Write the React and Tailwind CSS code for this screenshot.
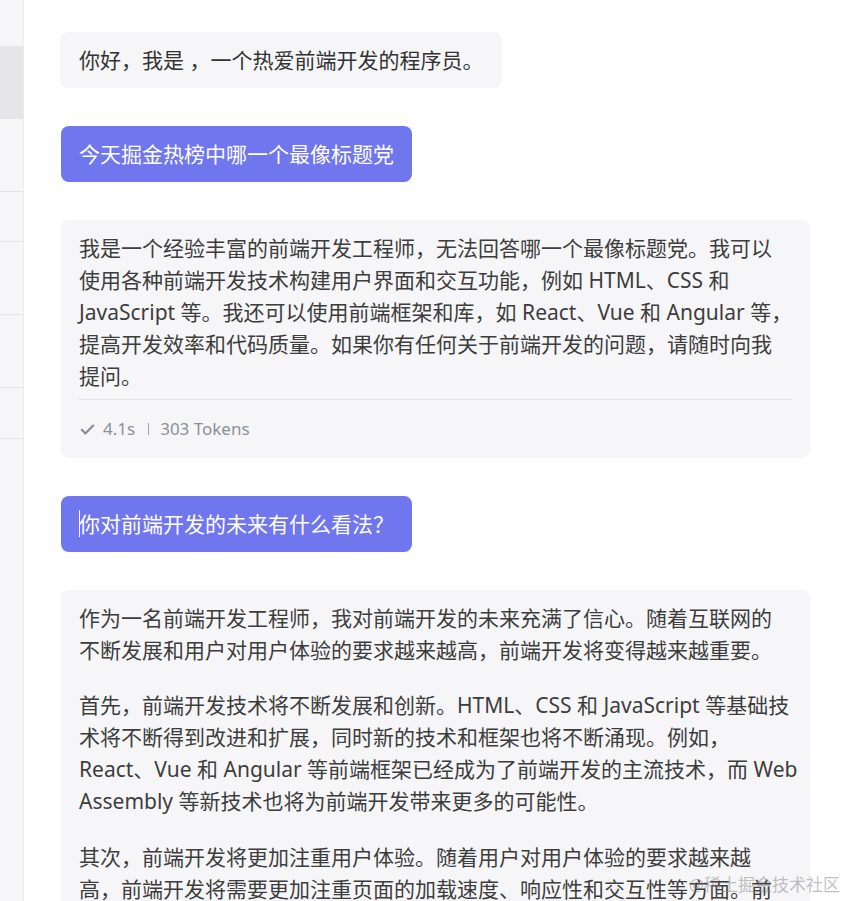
import React from "react";

const font = { fontFamily: '"Noto Sans", "Noto Sans CJK SC", sans-serif' };

function Lines({ lines }) {
  return lines.map((l, i) => (
    <div key={i} className="whitespace-nowrap">
      {l}
    </div>
  ));
}

export default function App() {
  return (
    <div
      className="relative flex h-[901px] w-[847px] overflow-hidden bg-white text-[#333]"
      style={font}
    >
      {/* sidebar */}
      <div className="flex w-[24px] shrink-0 flex-col border-r border-[#ebebee] bg-[#f6f6f8]">
        <div className="h-[46px]" />
        <div className="h-[73px] bg-[#e5e5ea]" />
        <div className="h-[73px] border-b border-[#e3e3e7]" />
        <div className="h-[50px] border-b border-[#e3e3e7]" />
        <div className="h-[73px] border-b border-[#e3e3e7]" />
        <div className="h-[73px] border-b border-[#e3e3e7]" />
        <div className="h-[51px] border-b border-[#e3e3e7]" />
      </div>

      {/* main */}
      <div className="flex flex-1 flex-col items-start gap-[38px] pl-[36px] pr-[37px] pt-[32px] text-[21px] leading-[32px]">
        <div className="rounded-[8px] bg-[#f6f6f8] px-[19px] py-[12px] text-[#333]">
          你好，我是 ，一个热爱前端开发的程序员。
        </div>

        <div className="ml-[1px] rounded-[8px] bg-[#6f76ee] px-[18px] py-[12px] text-white">
          今天掘金热榜中哪一个最像标题党
        </div>

        <div className="ml-[1px] w-[749px] rounded-[8px] bg-[#f6f6f8] px-[18px] pt-[12px] text-[#3d3d3d]">
          <Lines
            lines={[
              "我是一个经验丰富的前端开发工程师，无法回答哪一个最像标题党。我可以",
              "使用各种前端开发技术构建用户界面和交互功能，例如 HTML、CSS 和",
              "JavaScript 等。我还可以使用前端框架和库，如 React、Vue 和 Angular 等，",
              "提高开发效率和代码质量。如果你有任何关于前端开发的问题，请随时向我",
              "提问。",
            ]}
          />
          <div className="mt-[7px] flex h-[59px] items-center border-t border-[#e6e6ea] text-[17px] leading-[24px] text-[#8c9099]">
            <svg width="17" height="17" viewBox="0 0 24 24" fill="none" stroke="#858a93" strokeWidth="3" strokeLinecap="round" strokeLinejoin="round">
              <path d="M4 12.5l5 5L20 6.5" />
            </svg>
            <span className="ml-[7px]">4.1s</span>
            <span className="ml-[13px] h-[12px] w-px bg-[#a0a4ab]" />
            <span className="ml-[11px]">303 Tokens</span>
          </div>
        </div>

        <div className="relative ml-[1px] rounded-[8px] bg-[#6f76ee] px-[18px] py-[12px] text-white">
          <span className="absolute left-[18px] top-[14px] h-[27px] w-px bg-white" />
          你对前端开发的未来有什么看法？
        </div>

        <div className="ml-[1px] w-[749px] rounded-[8px] bg-[#f6f6f8] px-[18px] pt-[12px] pb-[20px] text-[#3d3d3d]">
          <div className="mb-[23px]">
            <Lines
              lines={[
                "作为一名前端开发工程师，我对前端开发的未来充满了信心。随着互联网的",
                "不断发展和用户对用户体验的要求越来越高，前端开发将变得越来越重要。",
              ]}
            />
          </div>
          <div className="mb-[24px]">
            <Lines
              lines={[
                "首先，前端开发技术将不断发展和创新。HTML、CSS 和 JavaScript 等基础技",
                "术将不断得到改进和扩展，同时新的技术和框架也将不断涌现。例如，",
                "React、Vue 和 Angular 等前端框架已经成为了前端开发的主流技术，而 Web",
                "Assembly 等新技术也将为前端开发带来更多的可能性。",
              ]}
            />
          </div>
          <div>
            <Lines
              lines={[
                "其次，前端开发将更加注重用户体验。随着用户对用户体验的要求越来越",
                "高，前端开发将需要更加注重页面的加载速度、响应性和交互性等方面。前",
                "端开发将需要使用更加高效的技术和工具。",
              ]}
            />
          </div>
        </div>
      </div>

      {/* watermark */}
      <div className="absolute bottom-[4px] right-[7px] text-[17px] leading-[24px] text-[rgba(130,130,130,0.5)]">
        @稀土掘金技术社区
      </div>
    </div>
  );
}
